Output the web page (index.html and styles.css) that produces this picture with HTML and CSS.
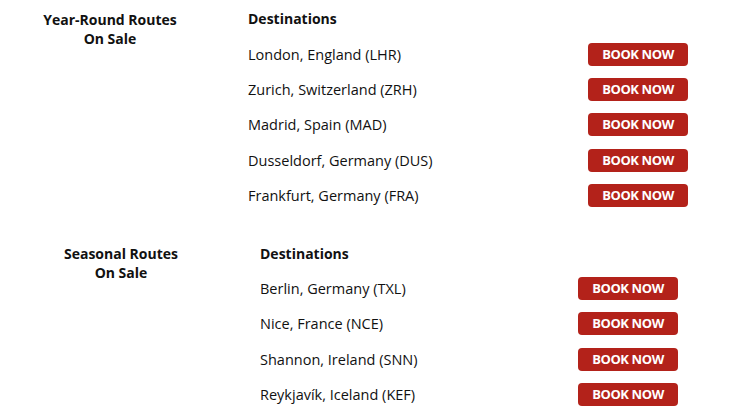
FILE: index.html
```html
<!DOCTYPE html>
<html>
<head>
<meta charset="utf-8">
<link rel="stylesheet" href="styles.css">
</head>
<body>
<section class="routes routes--year">
  <h2 class="routes__title">Year-Round Routes<br>On Sale</h2>
  <div class="routes__list">
    <div class="routes__row routes__head">Destinations</div>
    <div class="routes__row"><span class="routes__dest">London, England (LHR)</span><a class="btn">BOOK NOW</a></div>
    <div class="routes__row"><span class="routes__dest">Zurich, Switzerland (ZRH)</span><a class="btn">BOOK NOW</a></div>
    <div class="routes__row"><span class="routes__dest">Madrid, Spain (MAD)</span><a class="btn">BOOK NOW</a></div>
    <div class="routes__row"><span class="routes__dest">Dusseldorf, Germany (DUS)</span><a class="btn">BOOK NOW</a></div>
    <div class="routes__row"><span class="routes__dest">Frankfurt, Germany (FRA)</span><a class="btn">BOOK NOW</a></div>
  </div>
</section>
<section class="routes routes--seasonal">
  <h2 class="routes__title">Seasonal Routes<br>On Sale</h2>
  <div class="routes__list">
    <div class="routes__row routes__head">Destinations</div>
    <div class="routes__row"><span class="routes__dest">Berlin, Germany (TXL)</span><a class="btn">BOOK NOW</a></div>
    <div class="routes__row"><span class="routes__dest">Nice, France (NCE)</span><a class="btn">BOOK NOW</a></div>
    <div class="routes__row"><span class="routes__dest">Shannon, Ireland (SNN)</span><a class="btn">BOOK NOW</a></div>
    <div class="routes__row"><span class="routes__dest">Reykjavík, Iceland (KEF)</span><a class="btn">BOOK NOW</a></div>
  </div>
</section>
</body>
</html>
```
FILE: styles.css
```css
html, body {
  margin: 0;
  padding: 0;
  background: #fff;
}
body {
  font-family: "Open Sans", "Liberation Sans", sans-serif;
  font-size: 14.5px;
  color: #111;
  padding-top: 1px;
}
.routes {
  display: flex;
  align-items: flex-start;
}
.routes + .routes {
  margin-top: 22px;
}
.routes__title {
  margin: 0;
  padding-top: 9px;
  font-size: 14px;
  line-height: 19px;
  font-weight: 700;
  text-align: center;
  flex: none;
}
.routes--year .routes__title { width: 220px; margin-right: 28px; }
.routes--year .routes__list { width: 440px; }
.routes--seasonal .routes__title { width: 242px; margin-right: 18px; }
.routes--seasonal .routes__list { width: 418px; }
.routes__list {
  display: flex;
  flex-direction: column;
}
.routes__row {
  height: 35.4px;
  display: flex;
  align-items: center;
  justify-content: space-between;
}
.routes__head {
  font-size: 14px;
  font-weight: 700;
}
.btn {
  display: block;
  width: 100px;
  height: 23px;
  box-sizing: border-box;
  background: #b3221a;
  color: #fff;
  border-radius: 4px;
  font-weight: 700;
  font-size: 13px;
  line-height: 23px;
  letter-spacing: -0.4px;
  text-align: center;
}
```
